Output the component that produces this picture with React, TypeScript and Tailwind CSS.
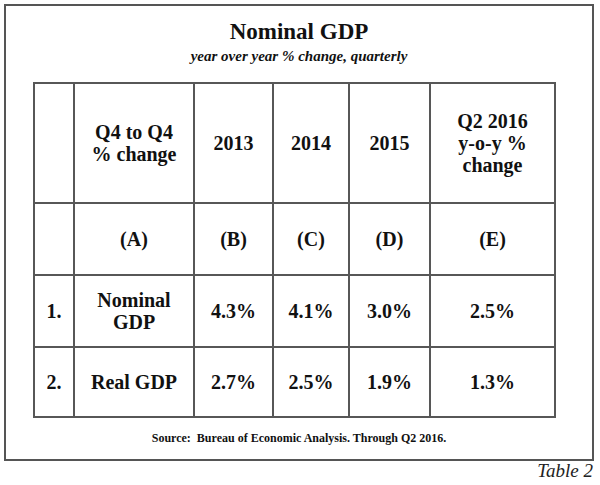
import React from "react";

const serif = { fontFamily: '"Liberation Serif", "Times New Roman", serif' };

function Cell({ children, className = "" }: { children?: React.ReactNode; className?: string }) {
  return (
    <div className={"bg-white flex items-center justify-center text-center text-[20px] leading-[22px] font-bold text-[#111] " + className}>
      {children}
    </div>
  );
}

export default function App() {
  return (
    <div className="w-[600px] h-[485px] bg-white relative" style={serif}>
      <div className="absolute left-[4px] top-[4px] w-[590px] h-[457px] border-2 border-[#555]">
        <div className="flex flex-col items-center">
          <div className="mt-[13px] text-[23px] leading-[26px] font-bold text-[#111]">Nominal GDP</div>
          <div className="mt-[2px] text-[15px] leading-[18px] font-bold italic text-[#111]">year over year % change, quarterly</div>
        </div>
        <div className="ml-[27px] mt-[17px] w-[523px] grid grid-cols-[38px_118px_77px_74px_79px_123px] grid-rows-[118px_70px_70px_68px] gap-[2px] p-[2px] bg-[#575757]">
          <Cell />
          <Cell>Q4 to Q4<br />% change</Cell>
          <Cell>2013</Cell>
          <Cell>2014</Cell>
          <Cell>2015</Cell>
          <Cell>Q2 2016<br />y-o-y %<br />change</Cell>
          <Cell />
          <Cell>(A)</Cell>
          <Cell>(B)</Cell>
          <Cell>(C)</Cell>
          <Cell>(D)</Cell>
          <Cell>(E)</Cell>
          <Cell>1.</Cell>
          <Cell>Nominal<br />GDP</Cell>
          <Cell>4.3%</Cell>
          <Cell>4.1%</Cell>
          <Cell>3.0%</Cell>
          <Cell>2.5%</Cell>
          <Cell>2.</Cell>
          <Cell>Real GDP</Cell>
          <Cell>2.7%</Cell>
          <Cell>2.5%</Cell>
          <Cell>1.9%</Cell>
          <Cell>1.3%</Cell>
        </div>
        <div className="mt-[14px] text-center text-[12px] leading-[13px] font-bold text-[#111]">
          Source:&nbsp; Bureau of Economic Analysis. Through Q2 2016.
        </div>
      </div>
      <div className="absolute right-[7px] top-[460px] text-[19px] leading-[22px] italic text-[#222]">Table 2</div>
    </div>
  );
}
